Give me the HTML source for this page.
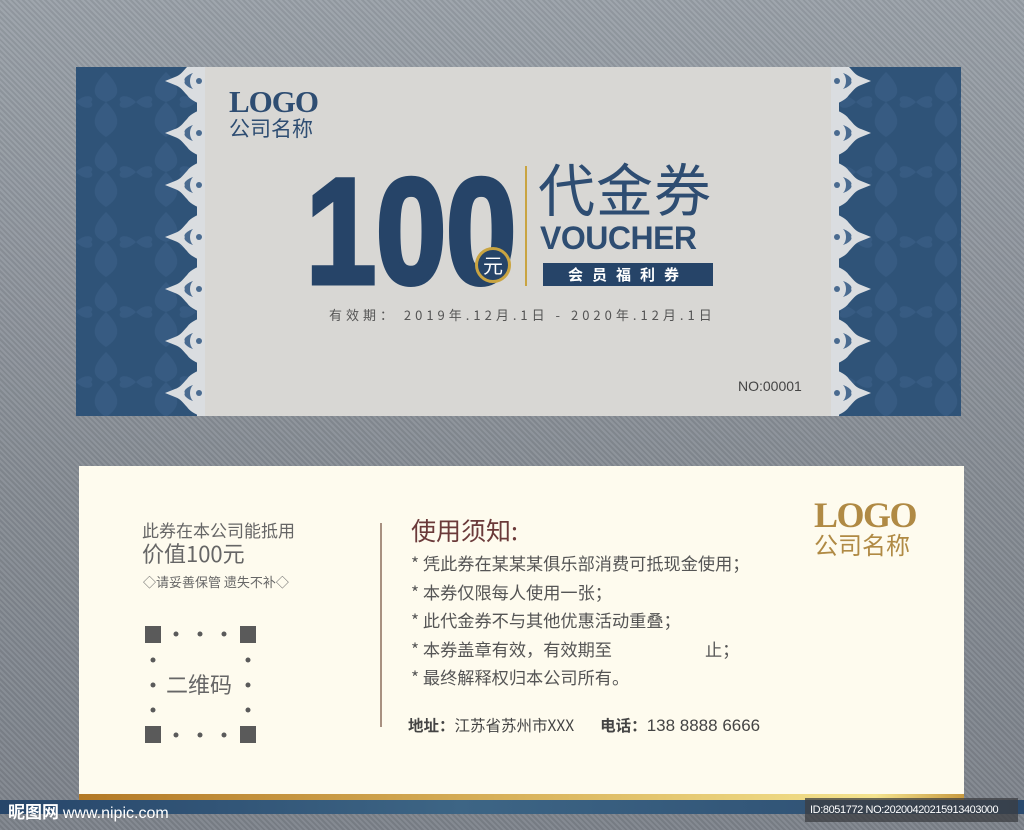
<!DOCTYPE html>
<html><head><meta charset="utf-8"><style>
*{margin:0;padding:0;box-sizing:border-box}
body{width:1024px;height:830px;overflow:hidden;position:relative;
background:#8d939b;background-image:repeating-linear-gradient(45deg,rgba(255,255,255,.06) 0 2px,rgba(0,0,0,.06) 2px 4px),linear-gradient(180deg,#99a0a8,#858b93 60%,#7d838b);
font-family:"Liberation Sans","Noto Sans CJK SC",sans-serif}
.abs{position:absolute}
.cjk{font-family:"Noto Sans CJK SC","Liberation Sans",sans-serif}
</style></head><body>
<div class="abs" style="left:76px;top:67px;width:885px;height:349px;background:#d8d7d4"></div>
<svg class="abs" style="left:76px;top:67px" width="885" height="349">
<defs>
<pattern id="dm" width="60" height="70" patternUnits="userSpaceOnUse">
<rect width="60" height="70" fill="#2f5378"/>
<path d="M30 5 C45 20 45 30 30 35 C15 30 15 20 30 5Z M30 35 C45 50 45 60 30 70 C15 60 15 50 30 35Z M0 35 C10 25 20 30 15 35 C20 40 10 45 0 35Z M60 35 C50 25 40 30 45 35 C40 40 50 45 60 35Z" fill="#3c6189" opacity=".6"/>
</pattern>
<g id="m">
<path d="M0 0 C-6 4 -14 6 -18 12 C-22 16 -24 20 -30 22 L-40 26 L-30 30 C-24 32 -22 36 -18 40 C-14 46 -6 48 0 52 C-4 46 -2 42 -6 38 C-2 34 -2 30 -4 26 C-2 22 -2 18 -6 14 C-2 10 -4 6 0 0Z" fill="#dadde0"/>
<path d="M-12 18 C-18 20 -22 24 -20 26 C-22 28 -18 32 -12 34 C-16 30 -16 22 -12 18Z" fill="#4a6b90"/>
<circle cx="-6" cy="26" r="3" fill="#4a6b90"/>
</g>
</defs>
<rect x="0" y="0" width="126" height="349" fill="url(#dm)"/>
<rect x="756" y="0" width="129" height="349" fill="url(#dm)"/>
<rect x="121" y="0" width="8" height="349" fill="#dadde0"/>
<rect x="755" y="0" width="8" height="349" fill="#dadde0"/>
<g transform="translate(129 0)">
<use href="#m" y="-12"/><use href="#m" y="40"/><use href="#m" y="92"/><use href="#m" y="144"/><use href="#m" y="196"/><use href="#m" y="248"/><use href="#m" y="300"/>
</g>
<g transform="translate(755 0) scale(-1 1)">
<use href="#m" y="-12"/><use href="#m" y="40"/><use href="#m" y="92"/><use href="#m" y="144"/><use href="#m" y="196"/><use href="#m" y="248"/><use href="#m" y="300"/>
</g>
</svg>
<div class="abs" style="left:229px;top:84px;font-family:'Liberation Serif',serif;font-weight:bold;font-size:31px;color:#2e4d72;letter-spacing:-1px">LOGO</div>
<div class="abs cjk" style="left:229px;top:116px;font-size:21px;color:#2e4d72;line-height:24px">公司名称</div>
<div class="abs" style="left:306px;top:156px;font-size:150px;font-weight:bold;color:#264468;-webkit-text-stroke:5px #264468;letter-spacing:0px;line-height:150px;transform:scaleX(.84);transform-origin:left">100</div>
<div class="abs cjk" style="left:475px;top:247px;width:36px;height:36px;border-radius:50%;background:#264468;border:3px solid #c9a441;color:#fff;font-size:20px;line-height:29px;text-align:center">元</div>
<div class="abs" style="left:525px;top:166px;width:2px;height:120px;background:#c9a441"></div>
<div class="abs cjk" style="left:538px;top:151px;font-size:57px;color:#2e4d72;line-height:72px;letter-spacing:1px">代金券</div>
<div class="abs" style="left:540px;top:221px;font-size:32px;font-weight:bold;color:#2e4d72;line-height:34px;letter-spacing:-.5px">VOUCHER</div>
<div class="abs cjk" style="left:543px;top:263px;width:170px;height:23px;background:#264468;color:#fff;font-size:15px;line-height:23px;text-align:center;letter-spacing:9px;font-weight:bold">会员福利券</div>
<div class="abs cjk" style="left:329px;top:305px;font-size:13px;color:#555;letter-spacing:4px;white-space:nowrap">有效期： 2019年.12月.1日 - 2020年.12月.1日</div>
<div class="abs" style="left:738px;top:378px;font-size:14px;color:#444">NO:00001</div>
<div class="abs" style="left:79px;top:466px;width:885px;height:328px;background:#fefbee"></div>
<div class="abs" style="left:79px;top:794px;width:885px;height:6px;background:linear-gradient(90deg,#b37926,#d9b35c 50%,#f4e38e 90%,#c89a40)"></div>
<div class="abs" style="left:0;top:800px;width:1024px;height:14px;background:linear-gradient(90deg,#27466a,#3d6585 45%,#2a4a6e)"></div>
<div class="abs cjk" style="left:142px;top:519px;font-size:17px;color:#666;line-height:22px">此券在本公司能抵用</div>
<div class="abs cjk" style="left:142px;top:540px;font-size:22px;color:#666;line-height:26px">价值100元</div>
<div class="abs cjk" style="left:143px;top:572px;font-size:13px;color:#666">◇请妥善保管 遗失不补◇</div>
<svg class="abs" style="left:144px;top:626px" width="115" height="120">
<g fill="#5a5a5a">
<rect x="1" y="0" width="16" height="17"/><rect x="96" y="0" width="16" height="17"/>
<rect x="1" y="100" width="16" height="17"/><rect x="96" y="100" width="16" height="17"/>
<circle cx="32" cy="8" r="2.5"/><circle cx="56" cy="8" r="2.5"/><circle cx="80" cy="8" r="2.5"/>
<circle cx="32" cy="109" r="2.5"/><circle cx="56" cy="109" r="2.5"/><circle cx="80" cy="109" r="2.5"/>
<circle cx="9" cy="34" r="2.5"/><circle cx="9" cy="59" r="2.5"/><circle cx="9" cy="84" r="2.5"/>
<circle cx="104" cy="34" r="2.5"/><circle cx="104" cy="59" r="2.5"/><circle cx="104" cy="84" r="2.5"/>
</g></svg>
<div class="abs cjk" style="left:166px;top:670px;font-size:22px;color:#666;line-height:28px">二维码</div>
<div class="abs" style="left:380px;top:523px;width:2px;height:204px;background:#a89080"></div>
<div class="abs cjk" style="left:411px;top:513px;font-size:25px;color:#6b3a3a;line-height:34px">使用须知:</div>
<div class="abs cjk" style="left:411px;top:549px;font-size:17.2px;color:#555;line-height:28.5px;white-space:nowrap">
<div>* 凭此券在某某某俱乐部消费可抵现金使用；</div>
<div>* 本券仅限每人使用一张；</div>
<div>* 此代金券不与其他优惠活动重叠；</div>
<div>* 本券盖章有效，有效期至<span style="display:inline-block;width:93px"></span>止；</div>
<div>* 最终解释权归本公司所有。</div>
</div>
<div class="abs cjk" style="left:408px;top:714px;font-size:15.5px;color:#444;font-weight:bold;line-height:22px;white-space:nowrap">地址：<span style="font-weight:normal">江苏省苏州市XXX</span><span style="display:inline-block;width:26px"></span>电话：<span style="font-weight:normal;font-size:17px;font-family:'Liberation Sans'">138 8888 6666</span></div>
<div class="abs" style="left:814px;top:494px;font-family:'Liberation Serif',serif;font-weight:bold;font-size:36px;color:#b08a44;letter-spacing:-1.5px">LOGO</div>
<div class="abs cjk" style="left:814px;top:530px;font-size:24px;color:#b08a44;line-height:28px">公司名称</div>
<div class="abs cjk" style="left:8px;top:800px;font-size:17px;color:#fff;font-weight:bold;line-height:22px">昵图网 <span style="font-family:'Liberation Sans';font-weight:normal;font-size:16px">www.nipic.com</span></div>
<div class="abs" style="left:805px;top:798px;width:213px;height:24px;background:rgba(60,62,66,.75);color:#fff;font-size:11px;line-height:24px;padding-left:5px;letter-spacing:-.4px">ID:8051772 NO:20200420215913403000</div>
</body></html>
